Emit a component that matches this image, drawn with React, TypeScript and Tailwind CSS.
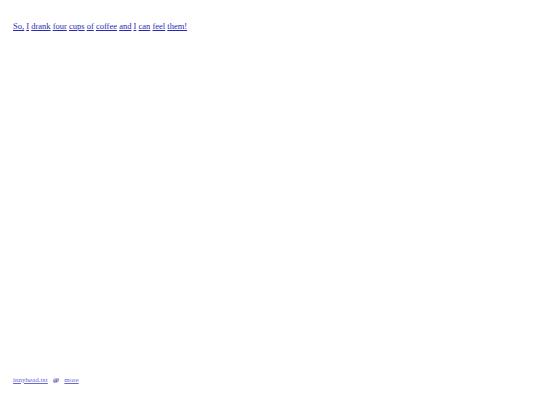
import React from "react";

const words = ["So,", "I", "drank", "four", "cups", "of", "coffee", "and", "I", "can", "feel", "them!"];

export default function App() {
  return (
    <div className="w-[540px] h-[405px] bg-white flex flex-col justify-between px-[13px] pt-[21px] pb-[21px]" style={{ fontFamily: '"Liberation Serif", serif' }}>
      <p className="text-[8.5px] leading-[10px] text-[#2a2ab8]">
        {words.map((w, i) => (
          <React.Fragment key={i}>
            <a href="#" className="underline">{w}</a>
            {i < words.length - 1 ? " " : ""}
          </React.Fragment>
        ))}
      </p>
      <div className="flex items-center gap-[5px] text-[7px] leading-[8px] text-[#6a6ad0]">
        <a href="#" className="underline">innyhead.txt</a>
        <span className="text-[#4a4aa8] font-bold">@</span>
        <a href="#" className="underline">more</a>
      </div>
    </div>
  );
}
